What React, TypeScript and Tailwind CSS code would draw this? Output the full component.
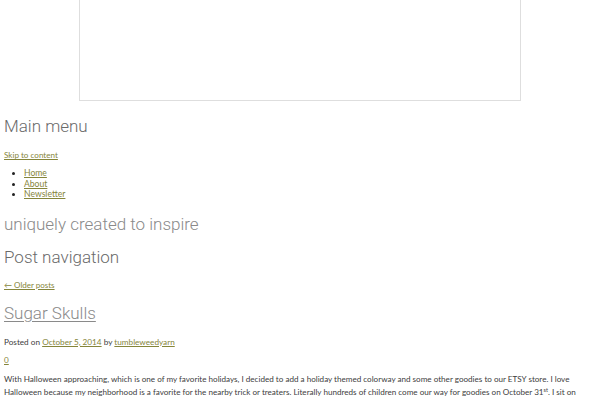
const linkCls = 'text-[#85853a] underline decoration-1 underline-offset-1'
const headCls = "font-['Roboto','Lato',sans-serif] text-[17px] leading-[24px] font-light"

const App = () => {
  return (
    <div className="min-h-[400px] bg-white px-[4px] font-['Lato','Liberation_Sans',sans-serif] text-[#404040]">
      <div className="mx-auto h-[101px] w-[442px] border-x border-b border-[#dedede]" />

      <h2 className={`mt-[13px] text-[#6a6a6a] ${headCls}`}>Main menu</h2>

      <a href="#content" className={`mt-[11px] block w-fit text-[8.1px] leading-[12px] ${linkCls}`}>
        Skip to content
      </a>

      <ul className="mt-[7px] list-disc pl-[20px] text-[8.6px] leading-[10.5px] marker:text-[#222]">
        <li><a href="#" className={linkCls}>Home</a></li>
        <li><a href="#" className={linkCls}>About</a></li>
        <li><a href="#" className={linkCls}>Newsletter</a></li>
      </ul>

      <h2 className={`mt-[12px] text-[#8a8a8a] ${headCls}`}>uniquely created to inspire</h2>

      <h2 className={`mt-[9px] text-[#6a6a6a] ${headCls}`}>Post navigation</h2>

      <a href="#" className={`mt-[10px] block w-fit text-[8px] leading-[12px] ${linkCls}`}>
        ← Older posts
      </a>

      <h1 className={`mt-[10px] ${headCls}`}>
        <a href="#" className="text-[#8a8a8a] underline decoration-1 underline-offset-2">Sugar Skulls</a>
      </h1>

      <p className="mt-[11px] text-[8.2px] leading-[12px]">
        Posted on <a href="#" className={linkCls}>October 5, 2014</a> by{' '}
        <a href="#" className={linkCls}>tumbleweedyarn</a>
      </p>

      <p className="mt-[6px] text-[8.2px] leading-[12px]">
        <a href="#" className={linkCls}>0</a>
      </p>

      <p className="mt-[7.5px] pr-[9px] text-[8.1px] leading-[13px]">
        With Halloween approaching, which is one of my favorite holidays, I decided to add a holiday themed colorway
        and some other goodies to our ETSY store. I love Halloween because my neighborhood is a favorite for the
        nearby trick or treaters. Literally hundreds of children come our way for goodies on October 31
        <sup className="text-[5.5px]">st</sup>. I sit on the front porch with a big bowl of candy and enjoy every
        costume that comes up the walk.
      </p>
    </div>
  )
}

export default App
